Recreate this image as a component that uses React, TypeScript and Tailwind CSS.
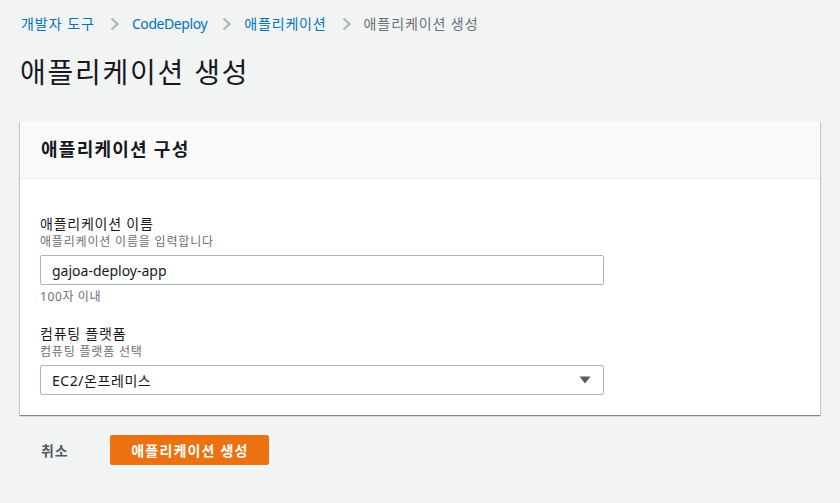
const font = "font-['Noto_Sans','Noto_Sans_CJK_KR',sans-serif]";

function Chevron() {
  return (
    <svg className="w-[9px] h-[14px] ml-[15px] mr-[13px]" viewBox="0 0 9 14" fill="none">
      <path d="M1.5 1.5l6 5.5-6 5.5" stroke="#aab7b8" strokeWidth="2" />
    </svg>
  );
}

function Field({
  label,
  desc,
  children,
}: {
  label: string;
  desc: string;
  children: React.ReactNode;
}) {
  return (
    <div>
      <div className="text-[14px] leading-[20px] tracking-[0.055em] text-[#16191f]">{label}</div>
      <div className="text-[12px] leading-[16px] tracking-[0.068em] text-[#687078]">{desc}</div>
      <div className="mt-[5px]">{children}</div>
    </div>
  );
}

export default function App() {
  return (
    <div className={`${font} min-h-[503px] bg-[#f2f3f3] px-5 pt-[14px]`}>
      <nav className="flex items-center text-[14px] leading-[20px]">
        <span className="ml-px text-[#0073bb] tracking-[0.07em]">개발자 도구</span>
        <Chevron />
        <span className="text-[#0073bb] tracking-[-0.03em]">CodeDeploy</span>
        <Chevron />
        <span className="text-[#0073bb] tracking-[0.06em]">애플리케이션</span>
        <Chevron />
        <span className="text-[#687078] tracking-[0.065em]">애플리케이션 생성</span>
      </nav>

      <h1 className="mt-[20px] text-[28px] leading-[36px] tracking-[0.063em] text-[#16191f]">
        애플리케이션 생성
      </h1>

      <section className="mt-[31px] w-[800px] bg-white shadow-[0_1px_1px_0_rgba(0,28,36,0.3),1px_1px_1px_0_rgba(0,28,36,0.15),-1px_1px_1px_0_rgba(0,28,36,0.15)]">
        <header className="h-[58px] flex items-center px-[21px] bg-[#fafafa] border-b border-[#eaeded]">
          <h2 className="text-[18px] font-bold tracking-[0.07em] text-[#16191f]">애플리케이션 구성</h2>
        </header>
        <div className="px-5 pt-[35px] pb-5">
          <Field label="애플리케이션 이름" desc="애플리케이션 이름을 입력합니다">
            <div className="w-[564px] h-[30px] border border-[#aab7b8] rounded-[2px] flex items-center px-[11px] text-[14px] text-[#16191f]">
              gajoa-deploy-app
            </div>
          </Field>
          <div className="mt-[4px] text-[12px] leading-[16px] tracking-[0.05em] text-[#687078]">100자 이내</div>

          <div className="mt-[19px]">
            <Field label="컴퓨팅 플랫폼" desc="컴퓨팅 플랫폼 선택">
              <div className="w-[564px] h-[30px] border border-[#aab7b8] rounded-[2px] flex items-center justify-between pl-[11px] pr-[12px] text-[14px] text-[#16191f]">
                <span className="tracking-[0.04em]">EC2/온프레미스</span>
                <svg className="w-[12px] h-[8px]" viewBox="0 0 12 8">
                  <path d="M0.5 0.5h11L6 7.5z" fill="#545b64" />
                </svg>
              </div>
            </Field>
          </div>
        </div>
      </section>

      <div className="mt-5 flex items-center">
        <span className="ml-[21px] text-[14px] font-bold tracking-[0.06em] text-[#545b64]">취소</span>
        <button className="ml-[42px] w-[159px] h-[30px] rounded-[2px] bg-[#ec7211] text-white text-[14px] font-bold tracking-[0.085em]">
          애플리케이션 생성
        </button>
      </div>
    </div>
  );
}
